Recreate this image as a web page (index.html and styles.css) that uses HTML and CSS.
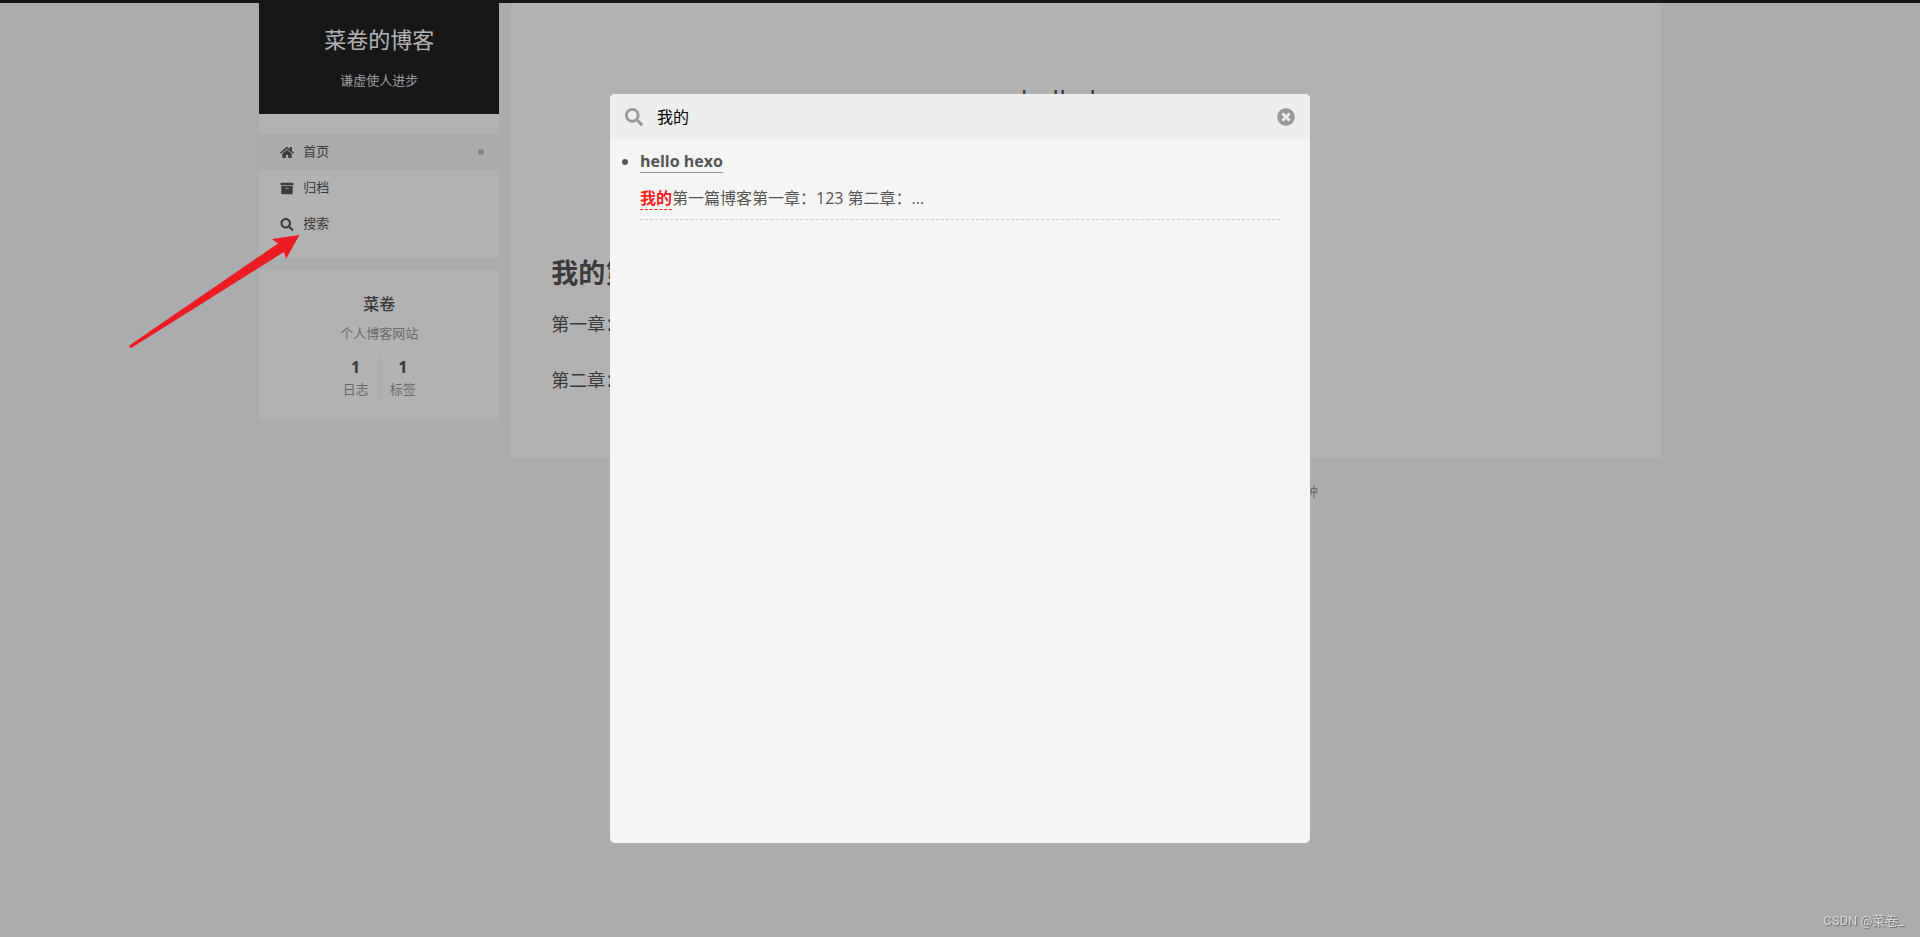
FILE: index.html
```html
<!DOCTYPE html>
<html lang="zh-CN">
<head>
<meta charset="utf-8">
<title>菜卷的博客</title>
<link rel="stylesheet" href="styles.css">
</head>
<body>
<svg class="sprite" aria-hidden="true">
  <symbol id="icon-search" viewBox="0 0 512 512"><path d="M505 442.7L405.300 343c-4.500-4.500-10.600-7-17-7H372c27.600-35.300 44-79.700 44-128C416 93.100 322.900 0 208 0S0 93.100 0 208s93.100 208 208 208c48.300 0 92.700-16.400 128-44v16.300c0 6.400 2.500 12.500 7 17l99.700 99.700c9.400 9.400 24.600 9.400 33.900 0l28.300-28.300c9.400-9.400 9.400-24.600.1-34zM208 336c-70.700 0-128-57.200-128-128 0-70.700 57.200-128 128-128 70.700 0 128 57.200 128 128 0 70.700-57.200 128-128 128z"/></symbol>
</svg>
<div class="layout">
  <aside class="sidebar">
    <div class="panel">
      <header class="brand">
        <h1 class="brand-title">菜卷的博客</h1>
        <p class="brand-subtitle">谦虚使人进步</p>
      </header>
      <nav class="menu">
        <a class="menu-item menu-item-active" href="#home">
          <svg class="menu-icon" viewBox="0 0 576 512" aria-hidden="true"><path d="M280.400 148.300L96 300.100V464a16 16 0 0 0 16 16l112.100-.3a16 16 0 0 0 15.900-16V368a16 16 0 0 1 16-16h64a16 16 0 0 1 16 16v95.600a16 16 0 0 0 16 16.100L464 480a16 16 0 0 0 16-16V300L295.700 148.300a12.200 12.200 0 0 0-15.300 0zM571.600 251.500L488 182.600V44.100a12 12 0 0 0-12-12h-56a12 12 0 0 0-12 12v72.600L318.500 43a48 48 0 0 0-61 0L4.300 251.500a12 12 0 0 0-1.600 16.900l25.500 31a12 12 0 0 0 16.900 1.600l235.200-193.700a12.200 12.200 0 0 1 15.300 0L530.900 301a12 12 0 0 0 16.900-1.600l25.500-31a12 12 0 0 0-1.700-16.900z"/></svg>
          <span class="menu-label">首页</span><i class="menu-dot"></i>
        </a>
        <a class="menu-item" href="#archives">
          <svg class="menu-icon" viewBox="0 0 512 512" aria-hidden="true"><path d="M32 448c0 17.700 14.300 32 32 32h384c17.700 0 32-14.300 32-32V160H32v288zm160-212c0-6.600 5.400-12 12-12h104c6.600 0 12 5.400 12 12v8c0 6.600-5.400 12-12 12H204c-6.600 0-12-5.400-12-12v-8zM480 32H32C14.300 32 0 46.300 0 64v48c0 8.800 7.200 16 16 16h480c8.800 0 16-7.200 16-16V64c0-17.700-14.300-32-32-32z"/></svg>
          <span class="menu-label">归档</span>
        </a>
        <a class="menu-item" href="#search">
          <svg class="menu-icon" aria-hidden="true"><use href="#icon-search"/></svg>
          <span class="menu-label">搜索</span>
        </a>
      </nav>
    </div>
    <section class="panel author">
      <p class="author-name">菜卷</p>
      <p class="author-about">个人博客网站</p>
      <div class="stats">
        <a class="stat" href="#posts"><b class="stat-count">1</b><span>日志</span></a>
        <a class="stat" href="#tags"><b class="stat-count">1</b><span>标签</span></a>
      </div>
    </section>
  </aside>
  <div class="column">
    <main class="post">
      <h2 class="post-title">hello hexo</h2>
      <h3 class="post-heading">我的第一篇博客</h3>
      <p class="post-text">第一章：123</p>
      <p class="post-text">第二章：</p>
    </main>
    <footer class="footer"><p class="footer-text">1 分钟</p></footer>
  </div>
</div>

<div class="overlay">
  <div class="popup" role="dialog" aria-label="搜索">
    <div class="search-bar">
      <svg class="search-icon" aria-hidden="true"><use href="#icon-search"/></svg>
      <input class="search-input" type="text" value="我的" aria-label="搜索">
      <button class="close" type="button" aria-label="关闭">
        <svg class="search-icon" viewBox="0 0 512 512" aria-hidden="true"><path d="M256 8C119 8 8 119 8 256s111 248 248 248 248-111 248-248S393 8 256 8zm121.600 313.100c4.700 4.700 4.700 12.300 0 17L338 377.600c-4.700 4.700-12.300 4.700-17 0L256 312l-65.100 65.600c-4.700 4.700-12.300 4.700-17 0L134.400 338c-4.700-4.700-4.700-12.300 0-17l65.600-65-65.600-65.100c-4.700-4.700-4.700-12.300 0-17l39.600-39.600c4.700-4.700 12.300-4.700 17 0l65 65.700 65.100-65.600c4.700-4.700 12.300-4.700 17 0l39.600 39.600c4.700 4.700 4.700 12.300 0 17L312 256l65.600 65.100z"/></svg>
      </button>
    </div>
    <ul class="results">
      <li class="result">
        <a class="result-title" href="#post">hello hexo</a>
        <p class="result-text"><b class="keyword">我的</b>第一篇博客第一章：123 第二章：...</p>
      </li>
    </ul>
  </div>
</div>
<svg class="arrow" viewBox="0 0 172 114" aria-hidden="true"><path d="M171.500 1L144 5l6 4.500L2 111a1.500 1.500 0 0 0 2 2.500L156 18l2 7z"/></svg>
<span class="watermark">CSDN @菜卷_</span>
</body>
</html>
```
FILE: styles.css
```css
* { box-sizing: border-box; }

body {
  margin: 0;
  min-height: 100vh;
  border-top: 3px solid #222;
  background: #f5f7f9;
  color: #555;
  font-family: "Open Sans", "Noto Sans CJK SC", sans-serif;
  font-size: 13px;
  line-height: 20px;
}

h1, h2, h3, p { margin: 0; }
a { color: inherit; text-decoration: none; }
svg { fill: currentColor; }

.sprite { position: absolute; width: 0; height: 0; }

.layout {
  display: flex;
  align-items: flex-start;
  gap: 12px;
  width: 73%;
  margin: 0 auto;
}

.sidebar {
  display: flex;
  flex: none;
  flex-direction: column;
  gap: 12px;
  width: 240px;
}

.panel { background: #fff; }

.brand {
  padding: 18px 0 24px;
  background: #222;
  color: #fff;
  text-align: center;
}

.brand-title { font-size: 22px; font-weight: 400; line-height: 36px; }
.brand-subtitle { padding-top: 13px; color: #ddd; }

.menu { padding: 20px 0 16px; }

.menu-item {
  display: flex;
  align-items: center;
  gap: 9px;
  height: 36px;
  padding: 0 15px 0 21px;
}

.menu-item-active { background: #f5f5f5; }
.menu-icon { width: 14px; height: 13px; }
.menu-label { padding-bottom: 2px; }

.menu-dot {
  width: 6px;
  height: 6px;
  margin-left: auto;
  border-radius: 50%;
  background: #bbb;
}

.author { padding: 22px 0 18px; color: #999; text-align: center; }
.author-name { color: #555; font-size: 16px; font-weight: 500; line-height: 24px; }
.author-about { padding: 7px 0 13px; }

.stats { display: flex; justify-content: center; }
.stat { display: flex; flex-direction: column; padding: 0 10px; line-height: 23px; }
.stat + .stat { border-left: 1px solid #eee; }
.stat-count { color: #555; font-size: 16px; line-height: 22px; }

.column { flex: 1; min-width: 0; }
.post { padding: 78px 40px 60px; background: #fff; }

.post-title {
  font-size: 27px;
  font-weight: 400;
  line-height: 40px;
  text-align: center;
}

.post-heading { margin-top: 132px; font-size: 27px; line-height: 40px; }
.post-text { margin-top: 20px; font-size: 18px; line-height: 36px; }
.post-heading + .post-text { margin-top: 13px; }

.footer { display: flex; justify-content: center; padding-top: 23px; color: #999; }
.footer-text { width: 464px; text-align: right; }

.overlay {
  position: fixed;
  inset: 0;
  display: flex;
  align-items: center;
  justify-content: center;
  background: rgba(0, 0, 0, 0.3);
}

.popup {
  width: 700px;
  height: 80%;
  overflow: hidden;
  border-radius: 5px;
  background: #f5f5f5;
}

.search-bar {
  display: flex;
  align-items: center;
  gap: 14px;
  height: 46px;
  padding: 0 15px;
  background: #eee;
  color: #999;
}

.search-icon { display: block; flex: none; width: 18px; height: 18px; }

.search-input {
  flex: 1;
  min-width: 0;
  padding: 0;
  border: 0;
  outline: 0;
  background: transparent;
  color: #000;
  font: inherit;
  font-size: 16px;
}

.close { padding: 0; border: 0; background: none; color: inherit; }

.results { margin: 0; padding: 7px 30px; font-size: 16px; }
.result { padding-bottom: 7px; border-bottom: 1px dashed #ccc; line-height: 28px; }

.result-title {
  display: inline-block;
  border-bottom: 1px solid #999;
  font-weight: 700;
  line-height: 22px;
}

.result-text { padding-top: 9px; }
.keyword { border-bottom: 1px dashed #f22; color: #f22; }

.arrow {
  position: absolute;
  top: 234px;
  left: 128px;
  width: 172px;
  height: 114px;
  fill: #ed1c24;
}

.watermark {
  position: fixed;
  right: 16px;
  bottom: 6px;
  color: #d8d8d8;
  font-family: Roboto, "Noto Sans CJK SC", sans-serif;
  font-size: 13px;
  text-shadow: 1px 1px 1px #666;
}
```
